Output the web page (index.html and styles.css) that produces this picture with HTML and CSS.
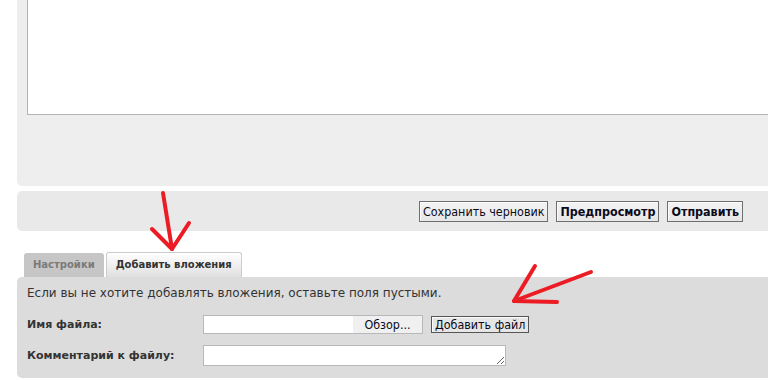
FILE: index.html
```html
<!DOCTYPE html>
<html lang="ru">
<head>
<meta charset="utf-8">
<link rel="stylesheet" href="styles.css">
</head>
<body>
<div class="page">
  <div class="editor-panel">
    <div class="editor-box"></div>
  </div>
  <div class="submit-panel">
    <button class="btn">Сохранить черновик</button>
    <button class="btn btn-bold">Предпросмотр</button>
    <button class="btn btn-bold">Отправить</button>
  </div>
  <div class="tabs">
    <div class="tab">Настройки</div>
    <div class="tab tab-active">Добавить вложения</div>
  </div>
  <div class="attach-panel">
    <p class="hint">Если вы не хотите добавлять вложения, оставьте поля пустыми.</p>
    <div class="row">
      <label class="label">Имя файла:</label>
      <div class="file">
        <span class="file-name"></span>
        <span class="file-browse">Обзор...</span>
      </div>
      <button class="btn btn-add">Добавить файл</button>
    </div>
    <div class="row">
      <label class="label">Комментарий к файлу:</label>
      <textarea class="comment"></textarea>
    </div>
  </div>
  <svg class="arrows" width="768" height="380" viewBox="0 0 768 380">
    <g fill="none" stroke="#ec1c24" stroke-width="4" stroke-linecap="round" stroke-linejoin="round">
      <path d="M163 194 L172 250"/>
      <path d="M152 230 L172 250 L189 224"/>
      <path d="M535 267 L514 302 L557 303"/>
      <path d="M591 273 L514 302"/>
    </g>
  </svg>
</div>
</body>
</html>
```
FILE: styles.css
```css
* { box-sizing: border-box; }
html, body { margin: 0; padding: 0; background: #fff; }
body {
  font-family: "DejaVu Sans", Verdana, sans-serif;
  color: #333;
  width: 768px;
  height: 380px;
  overflow: hidden;
}
.page {
  position: relative;
  padding-left: 17px;
  height: 380px;
}
.editor-panel {
  background: #eeeeee;
  height: 187px;
  padding-left: 10px;
  border-radius: 0 0 0 5px;
}
.editor-box {
  height: 116px;
  margin-top: -1px;
  background: #fff;
  border: 1px solid #b4b4b4;
  border-right: none;
}
.submit-panel {
  margin-top: 5px;
  height: 40px;
  background: #e9e9e9;
  border-radius: 5px 0 0 5px;
  display: flex;
  justify-content: flex-end;
  align-items: flex-start;
  gap: 8px;
  padding: 10px 25px 0 0;
}
.btn {
  font-family: "DejaVu Sans Condensed", "DejaVu Sans", Tahoma, sans-serif;
  font-stretch: condensed;
  font-size: 12.4px;
  color: #0a0a1a;
  height: 21px;
  padding: 0 3px;
  background: linear-gradient(#f4f4f4, #e6e6e6);
  border: 1px solid #6f6f6f;
  box-shadow: inset 1px 1px 0 #fcfcfc;
  border-radius: 0;
  line-height: 19px;
}
.btn-bold { font-weight: bold; }
.tabs {
  display: flex;
  align-items: flex-end;
  gap: 2px;
  margin-top: 20px;
  padding-left: 7px;
  height: 26px;
}
.tab {
  font-size: 10px;
  font-weight: bold;
  color: #7a7a7a;
  background: #c6c6c6;
  height: 24px;
  padding: 0 9px;
  line-height: 24px;
  border-radius: 3px 3px 0 0;
}
.tab-active {
  color: #333;
  height: 25px;
  background: linear-gradient(#ffffff, #e0e0e0);
  border: 1px solid #cccccc;
  border-bottom: none;
  line-height: 24px;
  padding: 0 9px;
}
.attach-panel {
  background: #dcdcdc;
  border-radius: 5px 0 0 5px;
  height: 101px;
  padding: 7px 0 0 10px;
}
.hint {
  margin: 0 0 13px;
  font-size: 12px;
  line-height: 18px;
  color: #333;
}
.row {
  display: flex;
  align-items: center;
  margin-bottom: 11px;
}
.label {
  width: 176px;
  font-size: 11px;
  font-weight: bold;
  color: #333;
}
.file {
  display: flex;
  width: 220px;
  height: 19px;
  border: 1px solid #b8b8b8;
  background: #fff;
}
.file-name { flex: 1; }
.file-browse {
  width: 69px;
  background: #f0f0f0;
  font-family: "DejaVu Sans Condensed", "DejaVu Sans", sans-serif;
  font-stretch: condensed;
  font-size: 12.4px;
  color: #0a0a1a;
  line-height: 17px;
  text-align: center;
}
.btn-add {
  margin-left: 8px;
  height: 17px;
  line-height: 15px;
  padding: 0 3px;
  border-color: #555;
  background: #e6e6e6;
}
.comment {
  width: 303px;
  height: 21px;
  border: 1px solid #b8b8b8;
  background: #fff;
  padding: 0;
  margin: 0;
  resize: both;
}
.arrows {
  position: absolute;
  left: 0;
  top: 0;
  pointer-events: none;
}
```
